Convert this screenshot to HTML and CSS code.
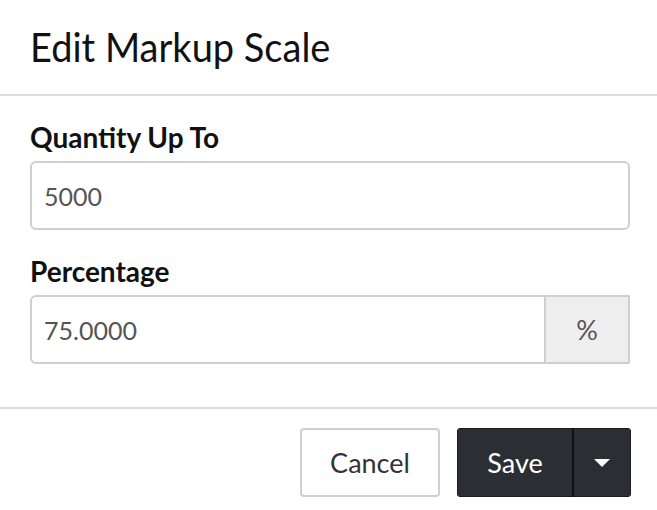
FILE: index.html
```html
<!DOCTYPE html>
<html>
<head>
<meta charset="utf-8">
<link rel="stylesheet" href="styles.css">
</head>
<body>
<div class="modal">
  <div class="modal-header">
    <h1 class="title">Edit Markup Scale</h1>
  </div>
  <div class="modal-body">
    <div class="field">
      <label class="label">Quantity Up To</label>
      <div class="input">5000</div>
    </div>
    <div class="field">
      <label class="label">Percentage</label>
      <div class="input-group">
        <div class="input grouped">75.0000</div>
        <div class="addon">%</div>
      </div>
    </div>
  </div>
  <div class="modal-footer">
    <button class="btn btn-default">Cancel</button>
    <div class="split">
      <button class="btn btn-dark main">Save</button>
      <button class="btn btn-dark caret-btn"><span class="caret"></span></button>
    </div>
  </div>
</div>
</body>
</html>
```

FILE: styles.css
```css
* { box-sizing: border-box; }
html, body { margin: 0; padding: 0; background: #fff; }
body { font-family: Lato, "Open Sans", sans-serif; color: #111; width: 657px; height: 510px; overflow: hidden; }
.modal { display: flex; flex-direction: column; }
.modal-header { height: 96px; border-bottom: 2px solid #dcdcdc; padding: 0 30px; display: flex; align-items: center; }
.title { margin: 0; font-weight: 400; font-size: 38px; line-height: 1; color: #111; padding-bottom: 2px; transform: scaleY(1.06); transform-origin: left center; }
.modal-body { padding: 24px 27px 43px 30px; display: flex; flex-direction: column; gap: 24px; border-bottom: 2px solid #dcdcdc; }
.field { display: flex; flex-direction: column; gap: 7px; }
.label { font-weight: 700; font-size: 28px; line-height: 34px; color: #111; }
.input { height: 69px; border: 2px solid #cfcfcf; border-radius: 6px; padding: 0 12px; display: flex; align-items: center; font-size: 25px; color: #555; }
.input-group { display: flex; height: 69px; }
.input.grouped { flex: 1; border-radius: 6px 0 0 6px; }
.addon { width: 84px; background: #eee; border: 2px solid #cfcfcf; border-left: none; display: flex; align-items: center; justify-content: center; font-size: 27px; color: #555; border-radius: 0 2px 2px 0; }
.modal-footer { display: flex; justify-content: flex-end; gap: 17px; padding: 19px 26px 0 0; }
.btn { font-family: inherit; font-size: 27px; height: 69px; border-radius: 4px; margin: 0; cursor: pointer; }
.btn-default { width: 140px; background: #fff; border: 2px solid #cfcfcf; color: #333; }
.split { display: flex; border-radius: 4px; overflow: hidden; }
.btn-dark { background: #2b2f33; color: #fff; border: 1px solid #1a1c1e; border-radius: 0; }
.main { width: 116px; border-right: 1px solid #111; }
.caret-btn { width: 58px; border-left: 1px solid #111; display: flex; align-items: center; justify-content: center; }
.caret { width: 0; height: 0; border-left: 8px solid transparent; border-right: 8px solid transparent; border-top: 8px solid #fff; }
```
